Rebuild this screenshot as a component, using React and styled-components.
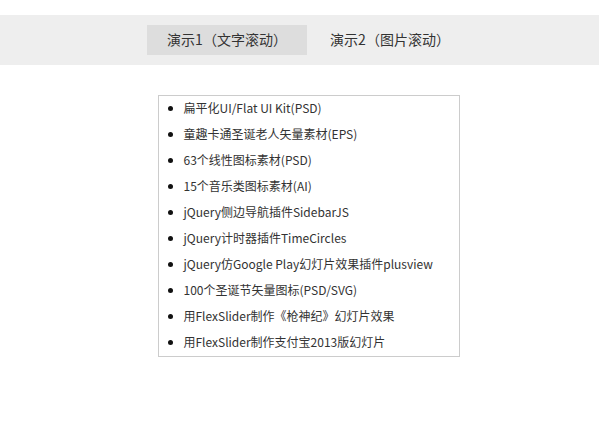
import styled, { createGlobalStyle } from "styled-components"

const GlobalStyle = createGlobalStyle`
    html, body {
        margin: 0;
        padding: 0;
        background: #fff;
    }
    body {
        font-family: "Noto Sans CJK SC", "Noto Sans", sans-serif;
        color: #333;
    }
`

const Page = styled.div`
    padding-top: 15px;
`

const NavBar = styled.div`
    height: 50px;
    background-color: #eeeeee;
    display: flex;
    align-items: center;
    justify-content: center;
    gap: 3px;
    padding-left: 18px;
`

const Tab = styled.div`
    width: 160px;
    height: 30px;
    line-height: 29px;
    text-align: center;
    font-size: 14px;
    color: #333;
    background-color: ${props => props.active ? "#dddddd" : "transparent"};
    cursor: pointer;
`

const Content = styled.div`
    display: flex;
    justify-content: center;
    padding-left: 18px;
    margin-top: 30px;
`

const Box = styled.ul`
    margin: 0;
    padding: 0 0 0 25px;
    box-sizing: border-box;
    width: 302px;
    border: 1px solid #cccccc;
    list-style: disc outside;
`

const Item = styled.li`
    height: 26px;
    line-height: 24px;
    padding-bottom: 2px;
    box-sizing: border-box;
    font-size: 12px;
    color: #333;
    white-space: nowrap;

    &::marker {
        color: #111;
    }
`

const items = [
    "扁平化UI/Flat UI Kit(PSD)",
    "童趣卡通圣诞老人矢量素材(EPS)",
    "63个线性图标素材(PSD)",
    "15个音乐类图标素材(AI)",
    "jQuery侧边导航插件SidebarJS",
    "jQuery计时器插件TimeCircles",
    "jQuery仿Google Play幻灯片效果插件plusview",
    "100个圣诞节矢量图标(PSD/SVG)",
    "用FlexSlider制作《枪神纪》幻灯片效果",
    "用FlexSlider制作支付宝2013版幻灯片",
]

const App = () => {
    return (
        <Page>
            <GlobalStyle />
            <NavBar>
                <Tab active>演示1（文字滚动）</Tab>
                <Tab>演示2（图片滚动）</Tab>
            </NavBar>
            <Content>
                <Box>
                    {items.map((text, i) => (
                        <Item key={i}>{text}</Item>
                    ))}
                </Box>
            </Content>
        </Page>
    )
}

export default App
